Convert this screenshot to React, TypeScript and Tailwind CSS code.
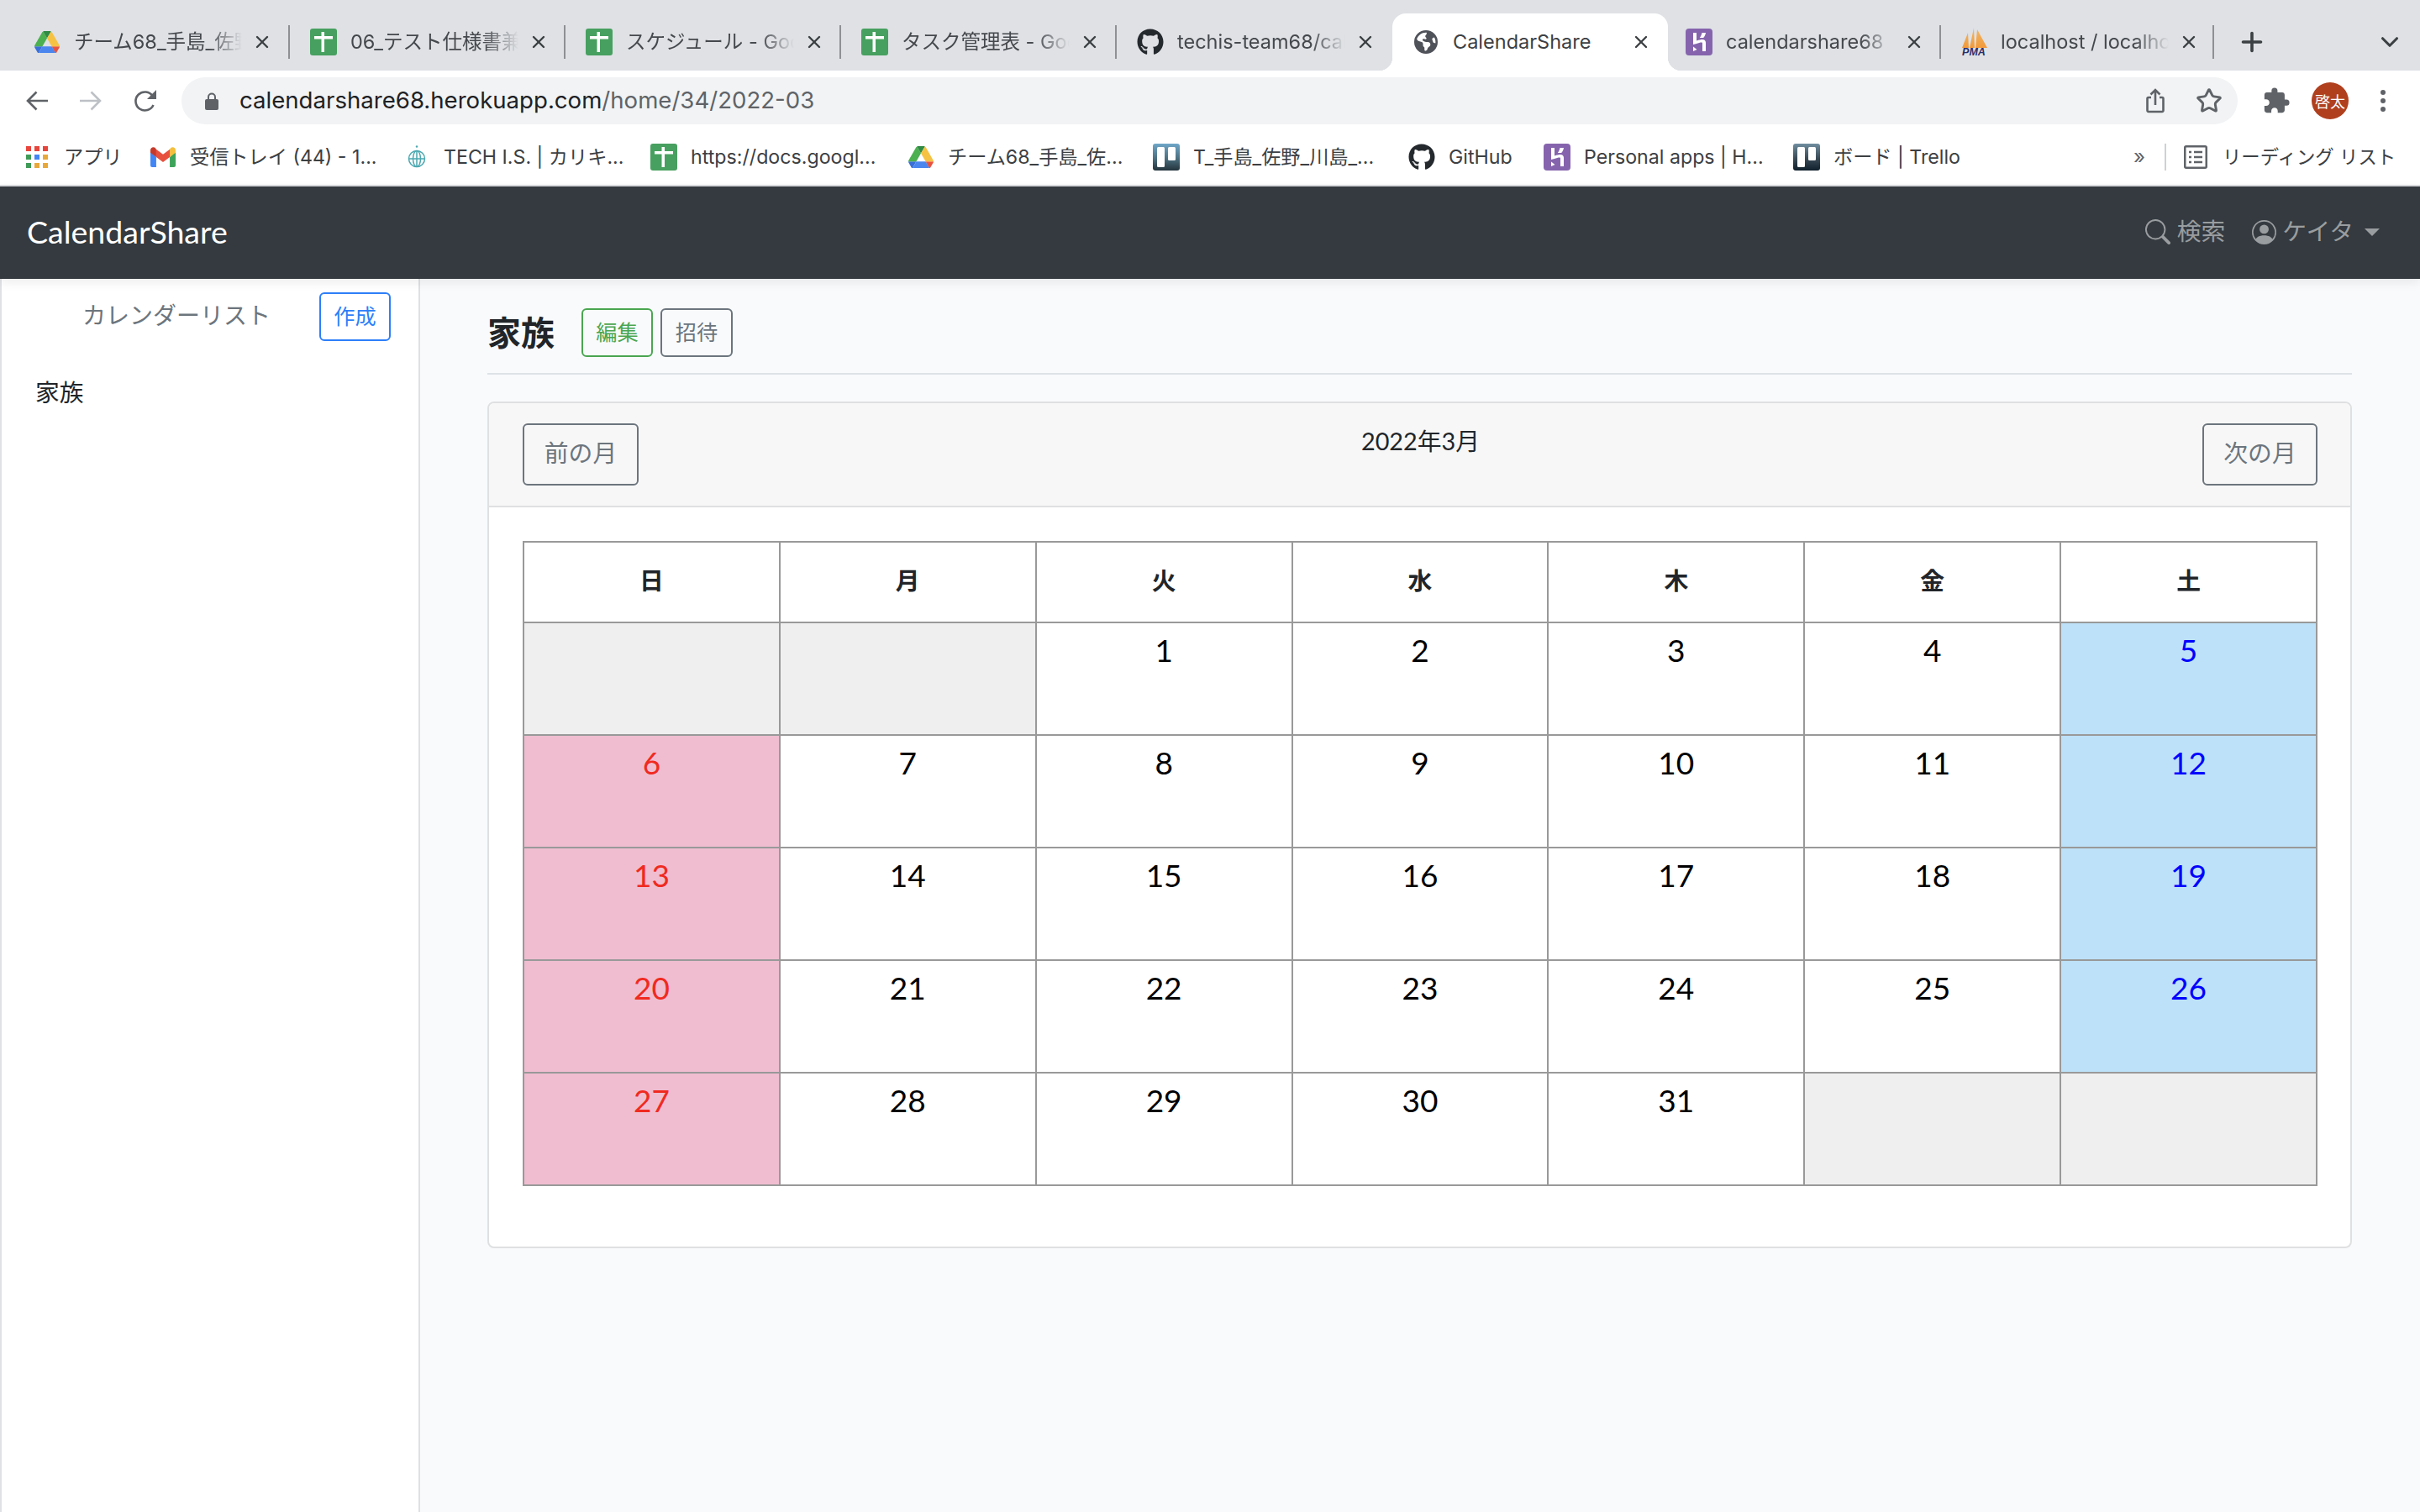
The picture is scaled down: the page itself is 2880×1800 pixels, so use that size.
import { Plus, X, Star, ChevronDown } from "lucide-react";
import { FaGithub } from "react-icons/fa";
import { FaEarthAmericas } from "react-icons/fa6";
import { MdExtension } from "react-icons/md";
import { BsSearch, BsPersonCircle } from "react-icons/bs";

const chrome = "font-['Inter','Noto_Sans_CJK_JP',sans-serif]";
const page = "font-['Lato','Noto_Sans_CJK_JP',sans-serif]";

function DriveIcon({ className }: { className?: string }) {
  return (
    <svg viewBox="0 0 87.3 78" className={className}>
      <path d="m6.6 66.85 3.85 6.65c.8 1.4 1.95 2.5 3.3 3.3l13.75-23.8h-27.5c0 1.55.4 3.1 1.2 4.5z" fill="#3b6fd8" />
      <path d="m43.65 25-13.75-23.8c-1.35.8-2.5 1.9-3.3 3.3l-25.4 44a9.06 9.06 0 0 0 -1.2 4.5h27.5z" fill="#4caf50" />
      <path d="m73.55 76.8c1.35-.8 2.5-1.9 3.3-3.3l1.6-2.75 7.65-13.25c.8-1.4 1.2-2.95 1.2-4.5h-27.502l5.852 11.5z" fill="#e8533f" />
      <path d="m43.65 25 13.75-23.8c-1.35-.8-2.9-1.2-4.5-1.2h-18.5c-1.6 0-3.15.45-4.5 1.2z" fill="#2f8a44" />
      <path d="m59.8 53h-32.3l-13.75 23.8c1.35.8 2.9 1.2 4.5 1.2h50.8c1.6 0 3.15-.45 4.5-1.2z" fill="#4b86ee" />
      <path d="m73.4 26.5-12.7-22c-.8-1.4-1.95-2.5-3.3-3.3l-13.75 23.8 16.15 28h27.45c0-1.55-.4-3.1-1.2-4.5z" fill="#f6c244" />
    </svg>
  );
}

function SheetsIcon() {
  return (
    <svg viewBox="0 0 32 32" className="h-8 w-8">
      <rect width="32" height="32" rx="3" fill="#47a05f" />
      <rect x="5" y="9" width="22" height="3.5" fill="#fff" />
      <rect x="13.5" y="4" width="3.5" height="24" fill="#fff" />
    </svg>
  );
}

function HerokuIcon() {
  return (
    <svg viewBox="0 0 32 32" className="h-8 w-8">
      <rect width="32" height="32" rx="4" fill="#8664ad" />
      <path d="M9 5h4v9.500c3-1 5.500-1.500 7-1.500 2.500 0 4 1.400 4 3.800V27h-4v-9.500c0-.8-.4-1-1-1-1.500 0-4 .7-6 1.500L9 19z" fill="#fff" />
      <path d="M19.500 5H24c-.4 2.300-1.300 4.200-2.800 6h-4.400c1.300-1.800 2.200-3.700 2.700-6z" fill="#fff" />
      <path d="M9 21.500 13.500 25 9 27z" fill="#fff" />
    </svg>
  );
}

function TrelloIcon({ dark }: { dark?: boolean }) {
  const id = dark ? "tr-dark" : "tr-light";
  return (
    <svg viewBox="0 0 32 32" className="h-8 w-8">
      <defs>
        <linearGradient id={id} x1="0" y1="0" x2="0" y2="1">
          <stop offset="0" stopColor={dark ? "#6f8d9f" : "#6fa6c8"} />
          <stop offset="0.55" stopColor={dark ? "#3a4a56" : "#4b6f80"} />
          <stop offset="1" stopColor={dark ? "#10202c" : "#24343c"} />
        </linearGradient>
      </defs>
      <rect width="32" height="32" rx="3" fill={`url(#${id})`} />
      <rect x="5" y="4" width="9" height="24" rx="1.500" fill="#fff" />
      <rect x="18" y="4" width="9" height="16" rx="1.500" fill="#fff" />
    </svg>
  );
}

function PmaIcon() {
  return (
    <svg viewBox="0 0 32 34" className="h-[34px] w-8">
      <defs>
        <linearGradient id="pma" x1="0" y1="0" x2="0" y2="1">
          <stop offset="0" stopColor="#f0b868" />
          <stop offset="1" stopColor="#f29a3a" />
        </linearGradient>
      </defs>
      <path d="M9 6 2 24h8z M16 0l-5 24h6z M20 2l-2 22h14z" fill="url(#pma)" />
      <text x="16" y="33" textAnchor="middle" fontSize="12.5" fontWeight="700" fontStyle="italic" fill="#2a2f6b" fontFamily="Liberation Sans, sans-serif">
        PMA
      </text>
    </svg>
  );
}

function AppsIcon() {
  const colors = ["#e8453c", "#e8453c", "#e8453c", "#3f9b57", "#4285f4", "#e8a93a", "#3f9b57", "#e8a93a", "#e8a93a"];
  return (
    <div className="grid h-[26px] w-[26px] grid-cols-3 gap-[4px]">
      {colors.map((c, i) => (
        <span key={i} className="block h-[6px] w-[6px]" style={{ backgroundColor: c }} />
      ))}
    </div>
  );
}

function GmailIcon() {
  return (
    <svg viewBox="0 0 52 42" className="h-[26px] w-[30px]">
      <path d="M0 10v28.500A3.500 3.500 0 0 0 3.500 42H12V21z" fill="#4285f4" />
      <path d="M40 21v21h8.500a3.500 3.500 0 0 0 3.500-3.500V10z" fill="#3da35a" />
      <path d="M40 5v16l12-9V6.500c0-5-5.500-7.700-9.500-5z" fill="#f5bf3b" />
      <path d="M12 21V5l14 10.500L40 5v16L26 31.500z" fill="#e8503e" />
      <path d="M0 6.500V12l12 9V5L9.500 1.500C5.500-1.200 0 1.500 0 6.500z" fill="#c5392b" />
    </svg>
  );
}

function TechIcon() {
  return (
    <svg viewBox="0 0 22 27" className="h-[27px] w-[22px]" fill="none" stroke="#4aa8b0" strokeWidth="1.500">
      <circle cx="11" cy="16" r="9.500" />
      <ellipse cx="11" cy="16" rx="4.500" ry="9.500" />
      <path d="M1.500 16h19M11 6.500v19" />
      <circle cx="11" cy="1.500" r="1.200" fill="#4aa8b0" stroke="none" />
    </svg>
  );
}

function LockIcon() {
  return (
    <svg viewBox="0 0 16 21" className="h-[21px] w-4">
      <path d="M4 9V5.500a4 4 0 0 1 8 0V9" fill="none" stroke="#5f6368" strokeWidth="2" />
      <rect y="8" width="16" height="13" rx="2" fill="#5f6368" />
    </svg>
  );
}

function ShareIcon() {
  return (
    <svg viewBox="0 0 22 30" className="h-[30px] w-[22px]" fill="none" stroke="#5f6368" strokeWidth="2.600">
      <path d="M6 11H3a1.500 1.500 0 0 0-1.500 1.500v14A1.500 1.500 0 0 0 3 28h16a1.500 1.500 0 0 0 1.500-1.500v-14A1.500 1.500 0 0 0 19 11h-3" />
      <path d="M11 20V2M5.500 7.500 11 2l5.500 5.500" />
    </svg>
  );
}

function ReadingIcon() {
  return (
    <svg viewBox="0 0 28 28" className="h-7 w-7" fill="none" stroke="#5f6368">
      <rect x="1.250" y="1.250" width="25.500" height="25.500" rx="1.500" strokeWidth="2.500" />
      <path d="M6 8h3M12 8h10M6 14h3M12 14h10M6 20h3M12 20h10" strokeWidth="2.500" />
    </svg>
  );
}

function BackIcon({ flip, color }: { flip?: boolean; color: string }) {
  return (
    <svg viewBox="0 0 26 24" className={flip ? "h-6 w-[26px] rotate-180" : "h-6 w-[26px]"} fill="none" stroke={color} strokeWidth="2.600">
      <path d="M26 12H2M12.500 1.500 2 12l10.500 10.500" />
    </svg>
  );
}

function ReloadIcon() {
  return (
    <svg viewBox="0 0 28 28" className="h-7 w-7">
      <path d="M23.500 19a11 11 0 1 1-.8-10.500" fill="none" stroke="#5f6368" strokeWidth="2.600" />
      <path d="M27 1v11H16z" fill="#5f6368" />
    </svg>
  );
}

type Tab = { icon: React.ReactNode; title: string; active?: boolean; sep?: boolean; width: string; inset: string };

const tabs: Tab[] = [
  { icon: <DriveIcon className="w-[30px]" />, title: "チーム68_手島_佐野_川島", sep: true, width: "w-[328px]", inset: "ml-[23px]" },
  { icon: <SheetsIcon />, title: "06_テスト仕様書兼結果", sep: true, width: "w-[328px]", inset: "ml-[24px]" },
  { icon: <SheetsIcon />, title: "スケジュール - Google", sep: true, width: "w-[328px]", inset: "ml-[24px]" },
  { icon: <SheetsIcon />, title: "タスク管理表 - Google", sep: true, width: "w-[328px]", inset: "ml-[24px]" },
  { icon: <FaGithub className="h-8 w-8 text-[#24292e]" />, title: "techis-team68/calendar", width: "w-[328px]", inset: "ml-[24px]" },
  { icon: <FaEarthAmericas className="h-7 w-7 text-[#50525a]" />, title: "CalendarShare", active: true, width: "w-[328px]", inset: "ml-[24px]" },
  { icon: <HerokuIcon />, title: "calendarshare68", sep: true, width: "w-[325px]", inset: "ml-[21px]" },
  { icon: <PmaIcon />, title: "localhost / localhost", sep: true, width: "w-[325px]", inset: "ml-[23px]" },
];

type Bookmark = { icon: React.ReactNode; title: string; width: string };

const bookmarks: Bookmark[] = [
  { icon: <AppsIcon />, title: "アプリ", width: "w-[150px]" },
  { icon: <GmailIcon />, title: "受信トレイ (44) - 1...", width: "w-[302px]" },
  { icon: <TechIcon />, title: "TECH I.S. | カリキ...", width: "w-[294px]" },
  { icon: <SheetsIcon />, title: "https://docs.googl...", width: "w-[306px]" },
  { icon: <DriveIcon className="w-[30px]" />, title: "チーム68_手島_佐...", width: "w-[292px]" },
  { icon: <TrelloIcon />, title: "T_手島_佐野_川島_...", width: "w-[304px]" },
  { icon: <FaGithub className="h-8 w-8 text-[#24292e]" />, title: "GitHub", width: "w-[161px]" },
  { icon: <HerokuIcon />, title: "Personal apps | H...", width: "w-[297px]" },
  { icon: <TrelloIcon dark />, title: "ボード | Trello", width: "w-[200px]" },
];

const days = ["日", "月", "火", "水", "木", "金", "土"];

const weeks: (number | null)[][] = [
  [null, null, 1, 2, 3, 4, 5],
  [6, 7, 8, 9, 10, 11, 12],
  [13, 14, 15, 16, 17, 18, 19],
  [20, 21, 22, 23, 24, 25, 26],
  [27, 28, 29, 30, 31, null, null],
];

function cellClass(day: number | null, col: number) {
  if (day === null) return "bg-[#efefef]";
  if (col === 0) return "bg-[#f0bdd0] text-[#f02a20]";
  if (col === 6) return "bg-[#bde1f8] text-[#0000ff]";
  return "bg-white text-black";
}

function TabItem({ tab }: { tab: Tab }) {
  return (
    <div
      className={`relative flex h-[68px] items-center ${tab.width} ${
        tab.active ? "rounded-t-[16px] bg-white text-[#3c4043]" : "text-[#45484c]"
      }`}
    >
      {tab.active ? (
        <>
          <span className="absolute bottom-0 left-[-16px] h-4 w-4 bg-[radial-gradient(circle_at_0_0,transparent_16px,white_16.5px)]" />
          <span className="absolute bottom-0 right-[-16px] h-4 w-4 bg-[radial-gradient(circle_at_100%_0,transparent_16px,white_16.5px)]" />
        </>
      ) : null}
      <div className={`${tab.inset} flex w-[32px] shrink-0 items-center justify-center`}>{tab.icon}</div>
      <div className={`ml-[16px] w-[200px] shrink-0 overflow-hidden whitespace-nowrap text-[23.5px] ${tab.active ? "" : "[mask-image:linear-gradient(to_right,black_80%,transparent_100%)]"}`}>
        {tab.title}
      </div>
      <X className="ml-[12px] h-[24px] w-[24px] shrink-0 text-[#3c4043]" strokeWidth={2.4} />
      {tab.sep ? <div className="ml-auto h-[40px] w-[2px] bg-[#8e9094]" /> : null}
    </div>
  );
}

export default function App() {
  return (
    <div className="flex h-[1800px] w-[2880px] flex-col overflow-hidden bg-white">
      <div className={`flex h-[84px] shrink-0 items-end bg-[#dfe1e5] pl-[17px] ${chrome}`}>
        {tabs.map((t) => (
          <TabItem key={t.title} tab={t} />
        ))}
        <div className="flex h-[68px] items-center">
          <Plus className="ml-[27px] h-[36px] w-[36px] text-[#3c4043]" strokeWidth={2.4} />
          <ChevronDown className="ml-[129px] h-[34px] w-[34px] text-[#3c4043]" strokeWidth={2.2} />
        </div>
      </div>

      <div className={`flex h-[64px] shrink-0 items-center pt-[8px] ${chrome}`}>
        <div className="ml-[31px]">
          <BackIcon color="#5f6368" />
        </div>
        <div className="ml-[38px]">
          <BackIcon flip color="#bdc1c6" />
        </div>
        <div className="ml-[38px]">
          <ReloadIcon />
        </div>
        <div className="ml-[29px] flex h-[56px] w-[2447px] items-center rounded-full bg-[#f1f3f4]">
          <div className="ml-[28px]">
            <LockIcon />
          </div>
          <span className="ml-[25px] text-[27.6px] text-[#202124]">
            calendarshare68.herokuapp.com<span className="text-[#5f6368]">/home/34/2022-03</span>
          </span>
          <div className="ml-auto flex items-center">
            <div className="mr-[1px]">
              <ShareIcon />
            </div>
            <Star className="ml-[36px] mr-[18px] h-[32px] w-[32px] text-[#5f6368]" strokeWidth={2.2} />
          </div>
        </div>
        <MdExtension className="ml-[29px] h-[34px] w-[34px] text-[#5f6368]" />
        <div className="ml-[25px] flex h-[44px] w-[44px] items-center justify-center rounded-full bg-[#b03f1e] font-['Noto_Sans_CJK_JP',sans-serif] text-[18px] text-white">
          啓太
        </div>
        <div className="ml-[38px] flex flex-col gap-[4px]">
          <span className="h-[6px] w-[6px] rounded-full bg-[#5f6368]" />
          <span className="h-[6px] w-[6px] rounded-full bg-[#5f6368]" />
          <span className="h-[6px] w-[6px] rounded-full bg-[#5f6368]" />
        </div>
      </div>

      <div className={`flex h-[72px] shrink-0 items-center pl-[28px] pt-[6px] text-[23.2px] text-[#3c4043] ${chrome}`}>
        {bookmarks.map((b) => (
          <div key={b.title} className={`flex shrink-0 items-center ${b.width}`}>
            <div className="flex h-8 w-8 items-center justify-center">{b.icon}</div>
            <span className="ml-[16px] whitespace-nowrap">{b.title}</span>
          </div>
        ))}
        <span className="ml-[205px] text-[24px] leading-none text-[#5f6368]">»</span>
        <div className="ml-[23px] h-[32px] w-[2px] bg-[#cfd1d4]" />
        <div className="ml-[21px]">
          <ReadingIcon />
        </div>
        <span className="ml-[18px] whitespace-nowrap text-[22.4px]">リーディング リスト</span>
      </div>

      <div className="h-[2px] shrink-0 bg-[#dadce0]" />

      <nav className={`relative z-10 flex h-[110px] shrink-0 items-center bg-[#343a40] pb-[2px] pl-[32px] pr-[48px] shadow-[0_4px_12px_rgba(0,0,0,0.08)] ${page}`}>
        <span className="text-[37.5px] text-white">CalendarShare</span>
        <div className="ml-auto flex items-center text-[28.8px] text-[#9a9d9f]">
          <BsSearch className="h-[30px] w-[30px]" />
          <span className="ml-[8px]">検索</span>
          <BsPersonCircle className="ml-[32px] h-[29px] w-[29px]" />
          <span className="ml-[7px] mr-[-1px]">ケイタ</span>
          <span className="ml-[14px] h-0 w-0 border-x-[9px] border-t-[9px] border-x-transparent border-t-[#9a9d9f]" />
        </div>
      </nav>

      <div className={`flex min-h-0 flex-1 ${page}`}>
        <aside className="w-[500px] shrink-0 border-x-2 border-[#dfe1e4] bg-white">
          <div className="flex items-start pt-[16px]">
            <span className="ml-[96px] mt-[5px] text-[28px] leading-[44px] text-[#6c757d]">カレンダーリスト</span>
            <button className="ml-[58px] h-[58px] w-[85px] rounded-[6px] border-2 border-[#2d7ff9] text-[25.2px] text-[#2d7ff9]">
              作成
            </button>
          </div>
          <div className="ml-[40px] mt-[38px] text-[28.8px] leading-[46px] text-[#212529]">家族</div>
        </aside>

        <main className="flex-1 bg-[#f8fafc] pl-[80px] pr-[81px]">
          <div className="flex h-[114px] items-center border-b-2 border-[#dee2e6] pt-[22px] pb-[6px]">
            <h1 className="text-[40px] font-bold leading-none text-[#212529]">家族</h1>
            <button className="ml-[32px] h-[58px] w-[85px] rounded-[6px] border-2 border-[#4aa650] text-[25.2px] text-[#4aa650]">
              編集
            </button>
            <button className="ml-[9px] h-[58px] w-[86px] rounded-[6px] border-2 border-[#6c757d] text-[25.2px] text-[#6c757d]">
              招待
            </button>
          </div>

          <div className="mt-[32px] rounded-[8px] border-2 border-[#dfe0e1] bg-white">
            <div className="flex h-[124px] items-start justify-between rounded-t-[6px] border-b-2 border-[#dfe0e1] bg-[#f7f7f7] pl-[40px] pr-[39px] pt-[24px]">
              <button className="h-[74px] w-[138px] rounded-[6px] border-2 border-[#6c757d] pb-[3px] text-[28.8px] text-[#6c757d]">
                前の月
              </button>
              <span className="mt-[-2px] text-[28.8px] leading-[46px] text-[#212529]">2022年3月</span>
              <button className="h-[74px] w-[137px] rounded-[6px] border-2 border-[#6c757d] pb-[3px] text-[28.8px] text-[#6c757d]">
                次の月
              </button>
            </div>
            <div className="pb-[72px] pl-[40px] pr-[39px] pt-[40px]">
              <table className="w-full table-fixed border-collapse">
                <thead>
                  <tr className="h-[96px]">
                    {days.map((d) => (
                      <th key={d} className="border-2 border-[#999] bg-white pb-[3px] text-center text-[28.8px] font-bold text-[#212529]">
                        {d}
                      </th>
                    ))}
                  </tr>
                </thead>
                <tbody>
                  {weeks.map((w, i) => (
                    <tr key={i} className="h-[134px]">
                      {w.map((day, col) => (
                        <td key={col} className={`border-2 border-[#999] pt-[6px] text-center align-top text-[37px] leading-[52px] ${cellClass(day, col)}`}>
                          {day}
                        </td>
                      ))}
                    </tr>
                  ))}
                </tbody>
              </table>
            </div>
          </div>
        </main>
      </div>
    </div>
  );
}
